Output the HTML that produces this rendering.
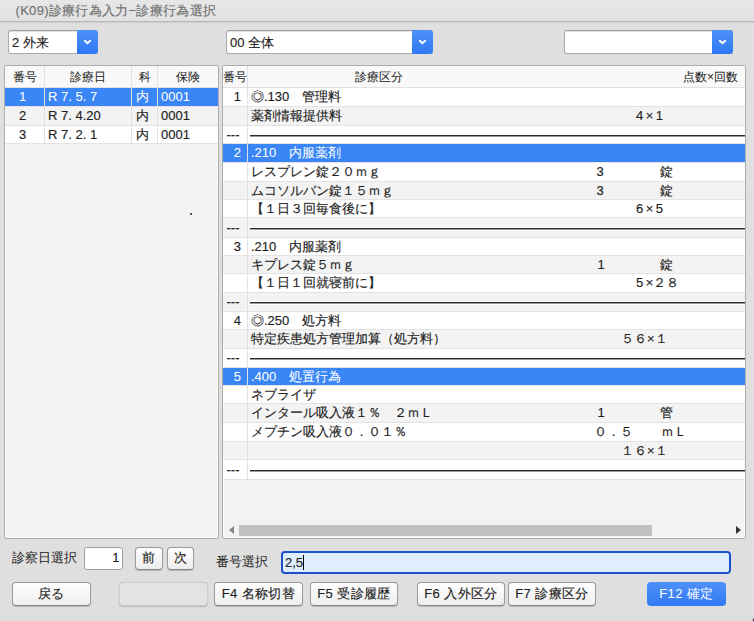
<!DOCTYPE html>
<html><head><meta charset="utf-8">
<style>
*{box-sizing:border-box}
html,body{margin:0;padding:0}
body{-webkit-text-stroke:0.15px currentColor;width:754px;height:621px;position:relative;overflow:hidden;background:#dfdfdf;font-family:"Liberation Sans",sans-serif;font-size:13px;color:#1e1e1e}
.abs{position:absolute}
.titlebar{position:absolute;left:0;top:0;width:754px;height:22px;background:linear-gradient(#e7e7e7,#e1e1e1);border-bottom:1px solid #b8b8b8;box-shadow:0 0.5px 0.5px #cfcfcf}
.titlebar span{position:absolute;left:15.5px;top:2px;letter-spacing:0.3px;color:#707070;white-space:nowrap}
.combo{position:absolute;top:30px;height:24px;background:#fff;border:1px solid #aaaaaa;border-top-color:#9c9c9c;border-radius:3px;box-shadow:inset 0 1px 0 #e6e6e6}
.combo .t{position:absolute;left:3px;top:2.5px;white-space:nowrap}
.combo .b{position:absolute;right:-1px;top:-1px;bottom:-1px;width:21px;background:linear-gradient(#4e91f8,#2e78f3);border-radius:0 3.5px 3.5px 0}
.combo .b svg{position:absolute;left:6px;top:9px}
.tbl{position:absolute;top:65px;height:474px;background:#f2f2f2;border:1px solid #adadad;border-radius:2px;box-shadow:inset 0 0 0 1px #fcfcfc}
.hdr{position:absolute;left:0;top:0;right:0;height:22px;background:#f9f9f9;border-bottom:1px solid #e2e2e2}
.row{position:absolute;left:0;right:0;height:18.67px;border-bottom:1px solid #e3e3e3}
.w{background:#fff}.g{background:#f3f3f3}.s{background:#3a86f6;color:#fff;-webkit-text-stroke:0.05px #fff}
.c{position:absolute;top:0;white-space:nowrap;line-height:inherit}
.h{-webkit-text-stroke:0.05px currentColor;position:absolute;top:0.5px;height:21px;line-height:21px;font-size:12px;text-align:center;white-space:nowrap;color:#262626}
.vl{position:absolute;top:0;width:1px;background:#e2e2e2}
.btn{letter-spacing:0.4px;position:absolute;top:582px;height:23.5px;background:linear-gradient(#fefefe,#eeeeee);border:1px solid #9c9c9c;border-bottom-color:#858585;border-radius:4px;text-align:center;line-height:21px;white-space:nowrap;box-shadow:0 0.5px 1px rgba(0,0,0,.18)}
.dash{position:absolute;left:27px;right:0;top:9px;height:1px;background:#2c2c2c;box-shadow:0 -1px 0 #fff,0 1px 0 #9a9a9a,0 2px 0 #fff}
.dd{position:absolute;top:1px}
</style></head><body>
<div class="titlebar"><span>(K09)診療行為入力−診療行為選択</span></div>

<div class="combo" style="left:8px;width:90px"><span class="t">2 外来</span><div class="b"><svg width="9" height="6" viewBox="0 0 9 6"><path d="M1.3 1.2 L4.5 4.3 L7.7 1.2" stroke="#fff" stroke-width="1.9" fill="none"/></svg></div></div>
<div class="combo" style="left:226px;width:207px"><span class="t">00 全体</span><div class="b"><svg width="9" height="6" viewBox="0 0 9 6"><path d="M1.3 1.2 L4.5 4.3 L7.7 1.2" stroke="#fff" stroke-width="1.9" fill="none"/></svg></div></div>
<div class="combo" style="left:564px;width:169px"><div class="b"><svg width="9" height="6" viewBox="0 0 9 6"><path d="M1.3 1.2 L4.5 4.3 L7.7 1.2" stroke="#fff" stroke-width="1.9" fill="none"/></svg></div></div>

<!-- left table -->
<div class="tbl" style="left:4px;width:215px">
  <div class="hdr">
    <span class="h" style="left:0;width:39.4px">番号</span>
    <span class="h" style="left:39.4px;width:87.4px">診療日</span>
    <span class="h" style="left:126.8px;width:25.9px">科</span>
    <span class="h" style="left:152.7px;width:60.3px">保険</span>
  </div>
  <div class="row s" style="top:22px;height:19px;line-height:18px"><span class="c" style="left:14px">1</span><span class="c" style="left:43px">R 7. 5. 7</span><span class="c" style="left:130.5px">内</span><span class="c" style="left:156px">0001</span></div>
  <div class="row g" style="top:41px;height:19px;line-height:18px"><span class="c" style="left:14px">2</span><span class="c" style="left:43px">R 7. 4.20</span><span class="c" style="left:130.5px">内</span><span class="c" style="left:156px">0001</span></div>
  <div class="row w" style="top:60px;height:18px;line-height:17px"><span class="c" style="left:14px">3</span><span class="c" style="left:43px">R 7. 2. 1</span><span class="c" style="left:130.5px">内</span><span class="c" style="left:156px">0001</span></div>
  <div class="vl" style="left:39px;height:78px"></div>
  <div class="vl" style="left:126px;height:78px"></div>
  <div class="vl" style="left:152px;height:78px"></div>
  <div class="abs" style="left:185px;top:147px;width:2px;height:2px;border-radius:1px;background:#222"></div>
</div>

<!-- right table -->
<div class="tbl" id="rt" style="left:222px;width:524px;overflow:hidden">
  <div class="hdr">
    <span class="h" style="left:0;width:24.5px">番号</span>
    <span class="h" style="left:24.5px;width:263px">診療区分</span>
    <span class="h" style="right:7px">点数×回数</span>
  </div>
  <div class="row w" style="top:22px;height:19px;line-height:18px"><span class="c" style="right:504px;top:0px">1</span><span class="c" style="left:28px">◎.130　管理料</span></div>
  <div class="row g" style="top:41px;height:19px;line-height:18px"><span class="c" style="left:28px">薬剤情報提供料</span><span class="c" style="left:413px">4<span style="margin:0 2.5px">×</span>1</span></div>
  <div class="row w" style="top:60px;height:18px;line-height:17px"><span class="c" style="right:505.5px;top:0px">---</span><div class="dash" style="top:9px"></div></div>
  <div class="row s" style="top:78px;height:19px;line-height:18px"><span class="c" style="right:504px;top:0px">2</span><span class="c" style="left:28px">.210　内服薬剤</span></div>
  <div class="row w" style="top:97px;height:19px;line-height:18px"><span class="c" style="left:28px">レスプレン錠２０ｍｇ</span><span class="c" style="left:373.5px">3</span><span class="c" style="left:436.5px">錠</span></div>
  <div class="row g" style="top:116px;height:18px;line-height:17px"><span class="c" style="left:28px">ムコソルバン錠１５ｍｇ</span><span class="c" style="left:373.5px">3</span><span class="c" style="left:436.5px">錠</span></div>
  <div class="row w" style="top:134px;height:18px;line-height:17px"><span class="c" style="left:28px">【１日３回毎食後に】</span><span class="c" style="left:413px">6<span style="margin:0 2.5px">×</span>5</span></div>
  <div class="row g" style="top:152px;height:20px;line-height:19px"><span class="c" style="right:505.5px;top:0px">---</span><div class="dash" style="top:10px"></div></div>
  <div class="row w" style="top:172px;height:18px;line-height:17px"><span class="c" style="right:504px;top:0px">3</span><span class="c" style="left:28px">.210　内服薬剤</span></div>
  <div class="row g" style="top:190px;height:18px;line-height:17px"><span class="c" style="left:28px">キプレス錠５ｍｇ</span><span class="c" style="left:374.5px">1</span><span class="c" style="left:436.5px">錠</span></div>
  <div class="row w" style="top:208px;height:19px;line-height:18px"><span class="c" style="left:28px">【１日１回就寝前に】</span><span class="c" style="left:413px">5<span style="margin-left:2.5px">×</span>２８</span></div>
  <div class="row g" style="top:227px;height:19px;line-height:18px"><span class="c" style="right:505.5px;top:0px">---</span><div class="dash" style="top:9px"></div></div>
  <div class="row w" style="top:246px;height:18px;line-height:17px"><span class="c" style="right:504px;top:0px">4</span><span class="c" style="left:28px">◎.250　処方料</span></div>
  <div class="row g" style="top:264px;height:19px;line-height:18px"><span class="c" style="left:28px">特定疾患処方管理加算（処方料）</span><span class="c" style="left:398px">５６×１</span></div>
  <div class="row w" style="top:283px;height:19px;line-height:18px"><span class="c" style="right:505.5px;top:0px">---</span><div class="dash" style="top:9px"></div></div>
  <div class="row s" style="top:302px;height:18px;line-height:17px"><span class="c" style="right:504px;top:0px">5</span><span class="c" style="left:28px">.400　処置行為</span></div>
  <div class="row w" style="top:320px;height:18px;line-height:17px"><span class="c" style="left:28px">ネブライザ</span></div>
  <div class="row g" style="top:338px;height:19px;line-height:18px"><span class="c" style="left:28px">インタール吸入液１％　２ｍＬ</span><span class="c" style="left:374.5px">1</span><span class="c" style="left:436.5px">管</span></div>
  <div class="row w" style="top:357px;height:19px;line-height:18px"><span class="c" style="left:28px">メプチン吸入液０．０１％</span><span class="c" style="left:371px">０．５</span><span class="c" style="left:438px">ｍＬ</span></div>
  <div class="row g" style="top:376px;height:18px;line-height:17px"><span class="c" style="left:398px">１６×１</span></div>
  <div class="row w" style="top:394px;height:20px;line-height:19px"><span class="c" style="right:505.5px;top:0px">---</span><div class="dash" style="top:10px"></div></div>
  <div class="vl" style="left:24px;height:414px"></div>
  <!-- scrollbar -->
  <svg class="abs" style="left:5.5px;top:460px" width="5" height="8"><path d="M5 0 L0 4 L5 8Z" fill="#858585"/></svg>
  <div class="abs" style="left:16px;top:459px;width:413px;height:11px;background:#c1c1c1"></div>
  <svg class="abs" style="left:512.5px;top:460px" width="5" height="8"><path d="M0 0 L5 4 L0 8Z" fill="#333"/></svg>
</div>

<!-- bottom controls -->
<span class="abs" style="left:12px;top:549px;white-space:nowrap;-webkit-text-stroke:0.05px currentColor;color:#2a2a2a">診察日選択</span>
<div class="abs" style="left:84px;top:547px;width:39px;height:22.5px;background:#fff;border:1px solid #a0a0a0;border-radius:3px;text-align:right;padding-right:2.5px;line-height:20px">1</div>
<div class="btn" style="left:135px;top:547px;width:28px;height:22.5px;line-height:20px">前</div>
<div class="btn" style="left:167px;top:547px;width:27px;height:22.5px;line-height:20px">次</div>
<span class="abs" style="left:216px;top:553px;white-space:nowrap;-webkit-text-stroke:0.05px currentColor;color:#2a2a2a">番号選択</span>
<div class="abs" style="left:281px;top:551px;width:450px;height:23px;background:#dfeeff;border:2px solid #1c50cc;border-radius:4px;line-height:20px;padding-left:2px">2,5<span style="display:inline-block;width:1px;height:15px;background:#000;vertical-align:-3px"></span></div>

<div class="btn" style="left:12px;width:79px">戻る</div>
<div class="btn" style="left:119px;width:89px;background:#e3e3e3;border-color:#cdcdcd"></div>
<div class="btn" style="left:214px;width:89px">F4 名称切替</div>
<div class="btn" style="left:310px;width:88px">F5 受診履歴</div>
<div class="btn" style="left:417px;width:88px">F6 入外区分</div>
<div class="btn" style="left:508px;width:88px">F7 診療区分</div>
<div class="btn" style="left:647px;width:79px;background:linear-gradient(#4f91f8,#2f79f3);border:none;color:#fff;line-height:23.5px;-webkit-text-stroke:0;letter-spacing:0.4px;box-shadow:none">F12 確定</div>
<div class="abs" style="right:0;bottom:0;width:4px;height:3px;background:radial-gradient(circle at 0 0,transparent 3px,#3a3f5a 4px)"></div>
</body></html>
